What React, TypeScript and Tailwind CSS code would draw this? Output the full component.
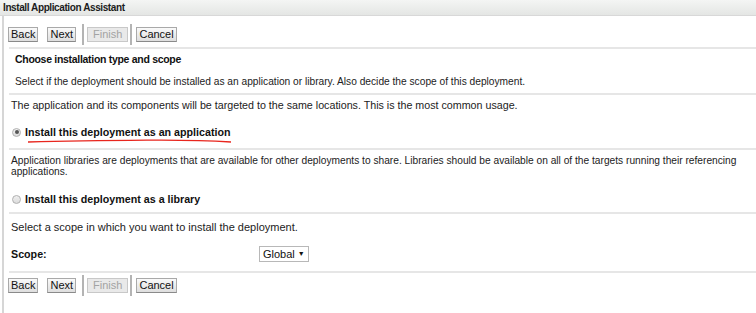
import React from "react";

const body = "font-['Liberation_Sans',Arial,sans-serif]";

function Btn({ label, disabled }: { label: string; disabled?: boolean }) {
  return (
    <span
      className={`flex h-[15px] items-center border text-[11px] leading-none ${
        disabled
          ? "border-[#c8c8c8] bg-[#e9e9e9] px-[5px] text-[#a3a3a3]"
          : "border-[#a9a9a9] border-b-[#8a8a8a] bg-gradient-to-b from-[#fafafa] to-[#dedede] px-[2px] text-[#111]"
      }`}
    >
      {label}
    </span>
  );
}

function ButtonBar() {
  return (
    <div className="flex h-[21px] items-center pl-[4px]">
      <Btn label="Back" />
      <span className="w-[9px]" />
      <Btn label="Next" />
      <span className="ml-[6px] mr-[3px] h-[21px] w-[2px] bg-[#b4b4b4]" />
      <Btn label="Finish" disabled />
      <span className="ml-[2px] mr-[4px] h-[21px] w-[2px] bg-[#b4b4b4]" />
      <Btn label="Cancel" />
    </div>
  );
}

function Radio({ checked }: { checked?: boolean }) {
  return (
    <span className="flex h-[9px] w-[9px] items-center justify-center rounded-full border border-[#b0b0b0] bg-gradient-to-b from-[#f0f0f0] to-[#dcdcdc]">
      {checked && <span className="h-[4px] w-[4px] rounded-full bg-[#555]" />}
    </span>
  );
}

function Rule() {
  return <div className="ml-[5px] h-[2px] bg-[#e6e6e6]" />;
}

export default function App() {
  return (
    <div className={`h-[313px] w-[756px] overflow-hidden bg-white text-[#222] ${body}`}>
      <div className="flex h-[16px] items-center border-b border-[#d8d8d8] bg-gradient-to-b from-[#f4f5f4] to-[#e4e6e4] pl-[3px] text-[10px] font-bold tracking-[-0.4px] text-[#1c1c1c]">
        Install Application Assistant
      </div>
      <div className="ml-[2px] h-[297px] border-l-2 border-[#d6d6d6]">
        <div className="h-[8px]" />
        <ButtonBar />
        <div className="h-[2px]" />
        <Rule />
        <div className="flex h-[21px] items-center pl-[11px] text-[10.5px] font-bold tracking-[-0.3px] text-[#111]">
          Choose installation type and scope
        </div>
        <div className="flex h-[23px] items-center pl-[11px] text-[10.2px]">
          Select if the deployment should be installed as an application or library. Also decide the scope of this deployment.
        </div>
        <Rule />
        <div className="flex h-[20px] items-center pl-[7px] text-[10.7px]">
          The application and its components will be targeted to the same locations. This is the most common usage.
        </div>
        <div className="relative flex h-[22px] items-center gap-[4px] pl-[8px] pt-[12px] text-[10.7px] font-bold text-[#111]">
          <Radio checked />
          <span>Install this deployment as an application</span>
          <svg className="absolute left-[23px] top-[24px]" width="206" height="5" viewBox="0 0 206 5">
            <path d="M1 3 C 40 2, 80 1.5, 120 1.2 S 180 1.5, 204 3" stroke="#e8261e" strokeWidth="1.3" fill="none" />
          </svg>
        </div>
        <div className="h-[11px]" />
        <Rule />
        <div className="pl-[7px] pt-[5px] text-[10.2px] leading-[11px]">
          Application libraries are deployments that are available for other deployments to share. Libraries should be available on all of the targets running their referencing
          <br />
          applications.
        </div>
        <div className="flex h-[29px] items-center gap-[4px] pl-[8px] pt-[15px] text-[10.7px] font-bold text-[#111]">
          <Radio />
          <span>Install this deployment as a library</span>
        </div>
        <div className="h-[6px]" />
        <Rule />
        <div className="flex h-[26px] items-center pl-[7px] text-[11px]">
          Select a scope in which you want to install the deployment.
        </div>
        <div className="flex h-[28px] items-center pl-[7px] text-[10.7px] font-bold text-[#111]">
          <span className="w-[248px]">Scope:</span>
          <span className="flex h-[16px] items-center gap-[3px] border border-[#b8b8b8] bg-white pl-[3px] pr-[3px] text-[11px] font-normal">
            Global <span className="text-[7px]">▼</span>
          </span>
        </div>
        <div className="h-[3px]" />
        <Rule />
        <div className="h-[2px]" />
        <ButtonBar />
      </div>
    </div>
  );
}
